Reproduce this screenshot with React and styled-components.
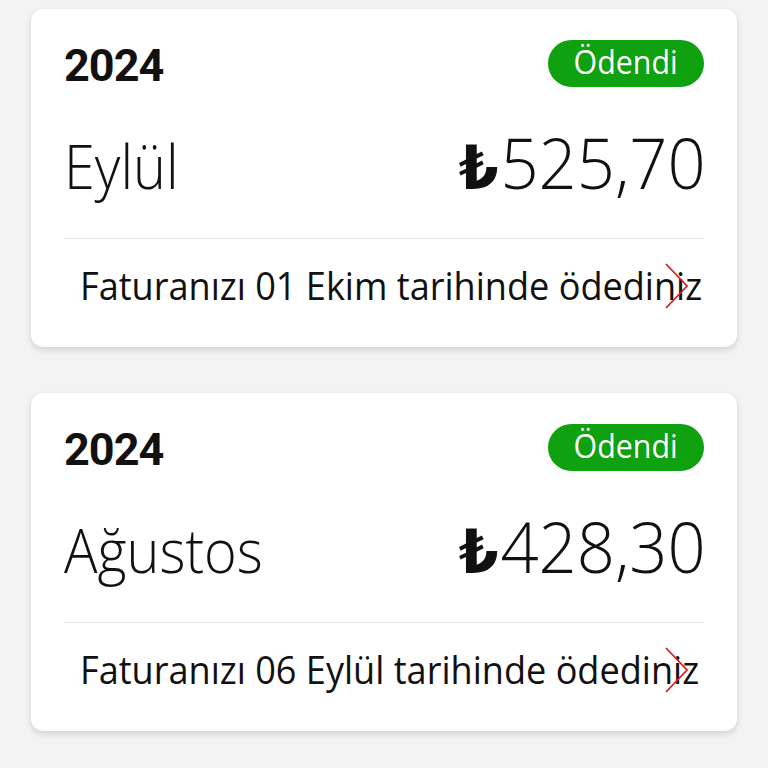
import React from 'react';
import styled, { createGlobalStyle } from 'styled-components';

const GlobalStyle = createGlobalStyle`
  body {
    margin: 0;
    background: #f3f3f3;
    font-family: 'Open Sans', 'Noto Sans', sans-serif;
    color: #111;
  }
`;

const Page = styled.div`
  padding: 9px 31px;
  display: flex;
  flex-direction: column;
  gap: 46px;
`;

const Card = styled.div`
  background: #fff;
  border-radius: 12px;
  box-shadow: 0 3px 6px rgba(0, 0, 0, 0.14), 0 0 1px rgba(0, 0, 0, 0.08);
  padding: 31px 33px 0 33px;
  height: 338px;
  box-sizing: border-box;
`;

const Header = styled.div`
  display: flex;
  justify-content: space-between;
  align-items: center;
  height: 47px;
`;

const Year = styled.div`
  font-family: 'Roboto', sans-serif;
  font-weight: 700;
  font-size: 45px;
  line-height: 1;
  letter-spacing: -1px;
  margin-top: 3px;
`;

const Badge = styled.div`
  background: #0fa10f;
  color: #fff;
  border-radius: 24px;
  height: 47px;
  width: 156px;
  display: flex;
  align-items: center;
  justify-content: center;
`;

const BadgeText = styled.span`
  font-size: 33px;
  line-height: 1;
  transform: scaleX(0.92);
  margin-top: -4px;
`;

const MainRow = styled.div`
  display: flex;
  justify-content: space-between;
  align-items: baseline;
  margin-top: 40px;
  padding-bottom: 40px;
  border-bottom: 1.5px solid #e6e6e6;
`;

const Month = styled.div`
  font-weight: 300;
  font-size: 60px;
  line-height: 1;
  transform: scaleX(0.93);
  transform-origin: left;
`;

const Amount = styled.div`
  font-weight: 300;
  font-size: 70px;
  line-height: 1;
  display: flex;
  align-items: baseline;
  transform: scaleX(0.955);
  transform-origin: right;
  margin-right: -2px;
`;

const Lira = styled.span`
  font-weight: 700;
  font-family: 'DejaVu Sans', sans-serif;
  font-size: 60px;
  margin-right: 2px;
`;

const Footer = styled.div`
  position: relative;
  padding: 27px 0 0 16px;
`;

const FooterText = styled.span`
  display: inline-block;
  font-size: 38px;
  line-height: 1;
  font-weight: 400;
  white-space: nowrap;
  transform: scaleX(0.95);
  transform-origin: left;
`;

const Chevron = styled.svg`
  position: absolute;
  left: 599px;
  top: 24px;
`;

const bills = [
  { year: '2024', month: 'Eylül', amount: '525,70', text: 'Faturanızı 01 Ekim tarihinde ödediniz' },
  { year: '2024', month: 'Ağustos', amount: '428,30', text: 'Faturanızı 06 Eylül tarihinde ödediniz' },
];

const App = () => (
  <>
    <GlobalStyle />
    <Page>
      {bills.map((b) => (
        <Card key={b.month}>
          <Header>
            <Year>{b.year}</Year>
            <Badge>
              <BadgeText>Ödendi</BadgeText>
            </Badge>
          </Header>
          <MainRow>
            <Month>{b.month}</Month>
            <Amount>
              <Lira>₺</Lira>
              {b.amount}
            </Amount>
          </MainRow>
          <Footer>
            <FooterText>{b.text}</FooterText>
            <Chevron width="26" height="46" viewBox="0 0 26 46">
              <polyline points="3,1 24,23 3,45" fill="none" stroke="#d42020" strokeWidth="1.8" />
            </Chevron>
          </Footer>
        </Card>
      ))}
    </Page>
  </>
);

export default App;
